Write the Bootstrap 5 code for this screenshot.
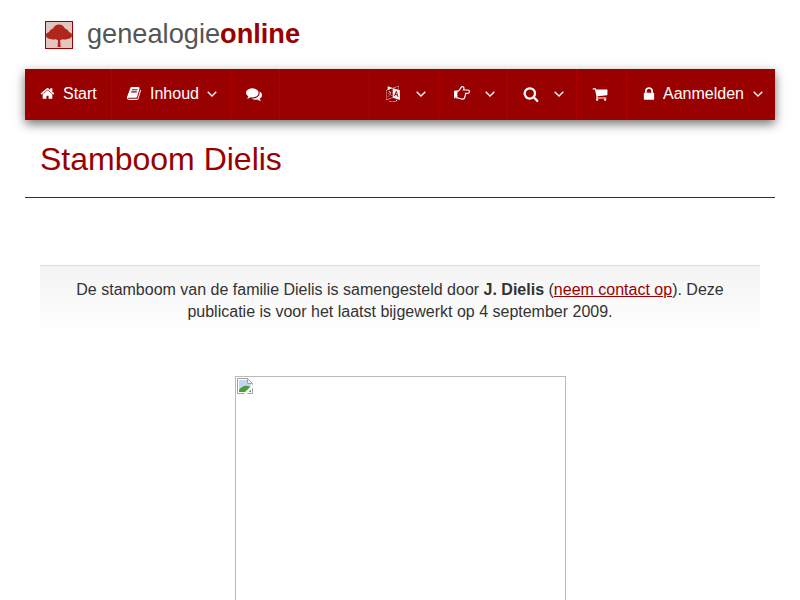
<!DOCTYPE html>
<html lang="nl">
<head>
    <meta charset="UTF-8">
    <meta name="viewport" content="width=device-width, initial-scale=1.0">
    <title>Stamboom Dielis</title>
    <link rel="stylesheet" href="https://cdn.jsdelivr.net/npm/bootstrap@5.3.3/dist/css/bootstrap.min.css">
    <style>
        html, body { overflow: hidden; }
        body {
            font-family: "Liberation Sans", Arial, sans-serif;
            font-size: 16px;
            color: #333;
            background: #fff;
        }
        .page-wrap { width: 750px; margin: 0 auto; }

        /* logo */
        .site-head { height: 69px; padding-left: 20px; gap: 14px; }
        .logo-mark { width: 28px; height: 28px; display: block; }
        .logo-text { font-size: 27.2px; line-height: 1; color: #555; margin-bottom: 2px; }
        .logo-text b { color: #900; }

        /* menu */
        .main-menu {
            height: 51px;
            background: #900;
            box-shadow: 0 4px 10px rgba(0, 0, 0, .55);
        }
        .menu-item {
            height: 100%;
            flex: none;
            color: #fff;
            text-decoration: none;
            border-right: 1px solid #b00000;
            font-size: 16px;
            gap: 8px;
            padding-left: 15px;
            padding-bottom: 2px;
        }
        .menu-item svg { fill: #fff; display: block; flex: none; }
        .menu-item .chev { fill: none; stroke: #fff; stroke-width: 1.3; }
        .w-start { width: 87px; }
        .w-inhoud { width: 119px; }
        .w-chat { width: 49px; }
        .w-spacer { width: 90px; padding: 0; }
        .w-icon { width: 69px; gap: 14px; }
        .w-icon .chev { margin-left: 1px; }
        .w-cart { width: 50px; }
        .w-login { width: 149px; border-right: 0; padding-left: 14px; gap: 6px; }
        .w-login .chev { margin-left: 3px; }

        /* content */
        .page-title {
            color: #900;
            font-size: 32px;
            font-weight: 400;
            line-height: 36px;
            margin: 0;
            padding: 21px 15px 20px;
            border-bottom: 1px solid #900;
        }
        .intro-box {
            margin: 67px 15px 0;
            padding: 13px 15px 0;
            height: 72px;
            text-align: center;
            line-height: 22px;
            border-top: 1px solid #ddd;
            background: linear-gradient(to bottom, #f4f4f4, #fff);
        }
        .intro-box a { color: #900; }
        .photo-frame {
            width: 331px;
            height: 400px;
            margin: 39px auto 0;
            padding: 1px;
            border: 1px solid #bbb;
        }
        .photo-frame svg { display: block; }
    </style>
</head>
<body>

<div class="page-wrap">
    <!-- logo -->
    <div class="site-head d-flex align-items-center">
        <svg class="logo-mark" viewBox="0 0 28 28">
            <defs><filter id="soft" x="-10%" y="-10%" width="120%" height="120%"><feGaussianBlur stdDeviation=".45"/></filter></defs>
            <rect x=".5" y=".5" width="27" height="27" fill="#e2c6c2"/>
            <g filter="url(#soft)" fill="#b0261c">
                <path d="M12.500 26l.6-6.500-4-2.500h10l-4 2.500.6 6.500z"/>
                <path d="M1 15q-.5-3 3-4 1-3 4-3.500 2-4 6-4t6 4q3 .5 4 3.500 3.500 1 3 4-1 3-5 3-2 1-5 0-3 1-6 0-3 1-5 0-4 0-5-3z"/>
            </g>
            <rect x=".5" y=".5" width="27" height="27" fill="none" stroke="#900"/>
        </svg>
        <div class="logo-text">genealogie<b>online</b></div>
    </div>

    <!-- menu -->
    <nav class="main-menu d-flex">
        <a href="#" class="menu-item w-start d-flex align-items-center">
            <svg width="15" height="15" viewBox="0 0 1792 1792"><path d="M1472 992v480q0 26-19 45t-45 19h-384v-384h-256v384h-384q-26 0-45-19t-19-45v-480q0-1 .5-3t.5-3l575-474 575 474q1 2 1 6zm223-69l-62 74q-8 9-21 11h-3q-13 0-21-7l-692-577-692 577q-12 8-24 7-13-2-21-11l-62-74q-8-10-7-23.5t11-21.5l719-599q32-26 76-26t76 26l244 204v-195q0-14 9-23t23-9h192q14 0 23 9t9 23v408l219 182q10 8 11 21.5t-7 23.5z"/></svg>
            Start
        </a>
        <a href="#" class="menu-item w-inhoud d-flex align-items-center">
            <svg width="15" height="15" viewBox="0 0 1792 1792"><path d="M1639 478q40 57 18 129l-275 906q-19 64-76.5 107.5t-122.5 43.5h-923q-77 0-148.5-53.5t-99.5-131.5q-24-67-2-127 0-4 3-27t4-37q1-8-3-21.5t-3-19.5q2-11 8-21t16.5-23.5 16.5-23.5q23-38 45-91.5t30-91.5q3-10 .5-30t-.5-28q3-11 17-28t17-23q21-36 42-92t25-90q1-9-2.5-32t.5-28q4-13 22-30.5t22-22.5q19-26 42.5-84.5t27.5-96.5q1-8-3-25.5t-2-26.5q2-8 9-18t18-23 17-21q8-12 16.5-30.5t15-35 16-36 19.5-32 26.5-23.5 36-11.5 47.5 5.5l-1 3q38-9 51-9h761q74 0 114 56t18 130l-274 906q-36 119-71.5 153.5t-128.5 34.5h-869q-27 0-38 15-11 16-1 43 24 70 144 70h923q29 0 56-15.5t35-41.5l300-987q7-22 5-57 38 15 59 43zm-1064 2q-4 13 2 22.5t20 9.5h608q13 0 25.5-9.5t16.5-22.5l21-64q4-13-2-22.5t-20-9.5h-608q-13 0-25.5 9.5t-16.5 22.5zm-83 256q-4 13 2 22.5t20 9.5h608q13 0 25.5-9.5t16.5-22.5l21-64q4-13-2-22.5t-20-9.5h-608q-13 0-25.5 9.5t-16.5 22.5z"/></svg>
            Inhoud
            <svg class="chev" width="10" height="6" viewBox="0 0 10 6"><path d="M.7.7 5 5 9.300.7"/></svg>
        </a>
        <a href="#" class="menu-item w-chat d-flex align-items-center">
            <svg width="16" height="16" viewBox="0 0 1792 1792"><path d="M1408 768q0 139-94 257t-256.500 186.500-353.500 68.500q-86 0-176-16-124 88-278 128-36 9-86 16h-3q-11 0-20.500-8t-11.500-21q-1-3-1-6.500t.5-6.500 2-6l2.500-5 3.500-5.500 4-5 4.500-5 4-4.500q5-6 23-25t26-29.500 22.500-29 25-38.500 20.500-44q-124-72-195-177t-71-224q0-139 94-257t256.500-186.500 353.500-68.500 353.500 68.500 256.500 186.500 94 257zm384 256q0 120-71 224.500t-195 176.500q10 24 20.500 44t25 38.500 22.500 29 26 29.500 23 25q1 1 4 4.500t4.500 5 4 5 3.500 5.500l2.500 5 2 6 .5 6.500-1 6.500q-3 14-13 22t-22 7q-50-7-86-16-154-40-278-128-90 16-176 16-271 0-472-132 58 4 88 4 161 0 309-45t264-129q125-92 192-212t67-254q0-77-23-152 129 71 204 178t75 230z"/></svg>
        </a>
        <div class="menu-item w-spacer"></div>
        <a href="#" class="menu-item w-icon d-flex align-items-center">
            <svg width="16" height="16" viewBox="0 0 1792 1792"><path d="M782 1078q-1 3-12.500-.5t-31.500-11.500l-20-9q-44-20-87-49-7-5-41-31.500t-38-28.500q-67 103-134 181-81 95-105 110-4 2-19.500 4t-18.500 0q6-4 82-92 21-24 85.500-115t78.500-118q17-30 51-98.500t36-77.500q-8-1-110 33-8 2-27.500 7.500t-34.500 9.500-17 5q-2 2-2 10.500t-1 9.500q-5 10-31 15-23 7-47 0-18-4-28-21-4-6-5-23 6-2 24.500-5t29.500-6q58-16 105-32 100-35 102-35 10-2 43-19.500t44-21.500q9-3 21.500-8t14.500-5.500 6 .5q2 12-1 33 0 2-12.500 27t-26.500 53.500-17 33.500q-25 50-77 131l64 28q12 6 74.500 32t67.500 28q4 1 10.500 25.500t4.500 30.500zm-205-486q3 15-4 28-12 23-50 38-30 12-60 12-26-3-49-26-14-15-18-41l1-3q3 3 19.500 5t26.500 0 58-16q36-12 55-14 17 0 21 17zm698 129l63 227-139-42zm-1108 800l694-232v-1032l-694 233v1031zm1241-317l102 31-181-657-100-31-216 536 102 31 45-110 211 65zm-503-962l573 184v-380zm311 1323l158 13-54 160-40-66q-130 83-276 108-58 12-91 12h-84q-79 0-199.500-39t-183.500-85q-8-7-8-16 0-8 5-13.500t13-5.500q4 0 18 7.500t30.500 16.500 20.500 11q73 37 159.500 61.500t157.500 24.500q95 0 167-14.500t157-50.500q15-7 30.500-15.500t34-19 28.500-16.500zm448-1079v1079l-774-246q-14 6-375 127.500t-368 121.500q-13 0-18-13 0-1-1-3v-1078q3-9 4-10 5-6 20-11 107-36 149-50v-384l558 198q2 0 160.500-55t316-108.500 161.500-53.500q20 0 20 21v418z"/></svg>
            <svg class="chev" width="10" height="6" viewBox="0 0 10 6"><path d="M.7.7 5 5 9.300.7"/></svg>
        </a>
        <a href="#" class="menu-item w-icon d-flex align-items-center">
            <svg width="16" height="16" viewBox="0 0 1792 1792"><path d="M256 1344q0-26-19-45t-45-19-45 19-19 45 19 45 45 19 45-19 19-45zm1408-704q0-51-39-89.500t-89-38.500h-576q0-20 15-48.500t33-55 33-68 15-84.500q0-67-44.500-97.500t-115.500-30.500q-24 0-90 139-24 44-37 65-40 64-112 145-71 81-101 106-69 57-140 57h-32v640h32q72 0 167 32t193.500 64 179.500 32q189 0 189-167 0-26-5-56 30-16 47.500-52.500t17.500-73.500-18-69q53-50 53-119 0-25-10-55.500t-25-47.500h331q52 0 90-38t38-90zm128-1q0 105-75.500 181t-180.500 76h-169q-4 62-37 119 3 21 3 43 0 101-60 178 1 139-85 219.500t-227 80.500q-133 0-322-69-164-59-223-59h-288q-53 0-90.500-37.500t-37.500-90.500v-640q0-53 37.500-90.500t90.500-37.500h288q10 0 21.500-4.500t23.500-14 22.500-18 24-22.500 20.500-21.500 19-21.500 14-17q65-74 100-129 13-21 33-62t37-72 40.500-63 55-49.500 69.500-17.500q125 0 206.500 67t81.500 189q0 68-22 128h374q104 0 180 76t76 179z"/></svg>
            <svg class="chev" width="10" height="6" viewBox="0 0 10 6"><path d="M.7.7 5 5 9.300.7"/></svg>
        </a>
        <a href="#" class="menu-item w-icon d-flex align-items-center">
            <svg width="16" height="16" viewBox="0 0 1792 1792"><path d="M1216 832q0-185-131.500-316.500t-316.500-131.500-316.500 131.500-131.500 316.500 131.500 316.500 316.500 131.500 316.500-131.500 131.500-316.500zm512 832q0 52-38 90t-90 38q-54 0-90-38l-343-342q-179 124-399 124-143 0-273.500-55.500t-225-150-150-225-55.500-273.500 55.500-273.500 150-225 225-150 273.500-55.500 273.500 55.500 225 150 150 225 55.500 273.500q0 220-124 399l343 343q37 37 37 90z"/></svg>
            <svg class="chev" width="10" height="6" viewBox="0 0 10 6"><path d="M.7.7 5 5 9.300.7"/></svg>
        </a>
        <a href="#" class="menu-item w-cart d-flex align-items-center">
            <svg width="16" height="16" viewBox="0 0 1792 1792"><path d="M704 1536q0 52-38 90t-90 38-90-38-38-90 38-90 90-38 90 38 38 90zm896 0q0 52-38 90t-90 38-90-38-38-90 38-90 90-38 90 38 38 90zm128-1088v512q0 24-16.500 42.500t-40.500 21.500l-1044 122q13 60 13 70 0 16-24 64h920q26 0 45 19t19 45-19 45-45 19h-1024q-26 0-45-19t-19-45q0-11 8-31.500t16-36 21.500-40 15.500-29.500l-177-823h-204q-26 0-45-19t-19-45 19-45 45-19h256q16 0 28.500 6.500t19.500 15.500 13 24.500 8 26 5.500 29.500 4.500 26h1201q26 0 45 19t19 45z"/></svg>
        </a>
        <a href="#" class="menu-item w-login d-flex align-items-center">
            <svg width="16" height="16" viewBox="0 0 1792 1792"><path d="M640 768h512v-192q0-106-75-181t-181-75-181 75-75 181v192zm832 96v576q0 40-28 68t-68 28h-960q-40 0-68-28t-28-68v-576q0-40 28-68t68-28h32v-192q0-184 132-316t316-132 316 132 132 316v192h32q40 0 68 28t28 68z"/></svg>
            Aanmelden
            <svg class="chev" width="10" height="6" viewBox="0 0 10 6"><path d="M.7.7 5 5 9.300.7"/></svg>
        </a>
    </nav>

    <h1 class="page-title">Stamboom Dielis</h1>

    <div class="intro-box">
        De stamboom van de familie Dielis is samengesteld door <b>J. Dielis</b> (<a href="#">neem contact op</a>). Deze publicatie is voor het laatst bijgewerkt op 4 september 2009.
    </div>

    <div class="photo-frame">
        <!-- broken image placeholder -->
        <svg width="16" height="16" viewBox="0 0 16 16">
            <path d="M.5.5h10l5 5v10H.5z" fill="#fff" stroke="#a0a0a0"/>
            <path d="M2 2h8v4h4v8H2z" fill="#c4d6f2"/>
            <path d="M2 14v-2q4-5 9-4l3 1v5z" fill="#4f9a3a"/>
            <path d="M10.500 1v4.500H15" fill="#eee" stroke="#a0a0a0"/>
            <path d="M16.500 7.500 8 16" fill="none" stroke="#fff" stroke-width="2.500"/>
        </svg>
    </div>
</div>

<script src="https://cdn.jsdelivr.net/npm/bootstrap@5.3.3/dist/js/bootstrap.bundle.min.js"></script>
</body>
</html>
